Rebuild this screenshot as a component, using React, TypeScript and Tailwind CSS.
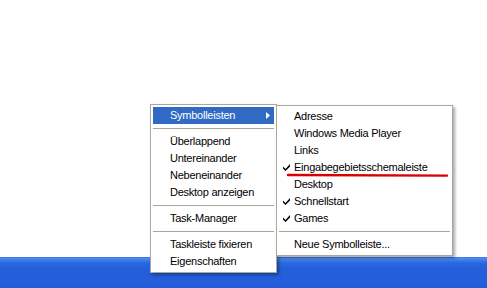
import React from "react";

const font = { fontFamily: '"Liberation Sans", Arial, sans-serif' };

function Check() {
  return (
    <svg width="7" height="7" viewBox="0 0 7 7" className="absolute left-[4px] top-[5px]">
      <polygon points="0,2.5 2.5,5 7,0 7,2.5 2.5,7 0,4.5" fill="#000" />
    </svg>
  );
}

function Separator() {
  return (
    <div className="h-[9px] flex items-center">
      <div className="h-px w-full bg-[#aca899]" />
    </div>
  );
}

function Item({ label, checked, pad = "pl-[17px]" }: { label: string; checked?: boolean; pad?: string }) {
  return (
    <div className={`relative h-[17px] flex items-center ${pad} text-black`}>
      {checked && <Check />}
      <span>{label}</span>
    </div>
  );
}

export default function App() {
  return (
    <div className="relative w-[487px] h-[288px] overflow-hidden bg-white flex flex-col text-[11px] tracking-[-0.25px]" style={font}>
      <div className="flex-1" />
      {/* taskbar */}
      <div className="h-[31px] bg-[linear-gradient(to_bottom,#3168d5_0px,#4c8ef0_1px,#3f80ec_3px,#2a67df_6px,#245edb_12px,#245edb_26px,#2259d6_31px)]" />

      {/* main context menu */}
      <div className="absolute left-[150px] top-[104px] w-[127px] bg-white border border-[#aca899] p-[2px] shadow-[2px_2px_3px_rgba(0,0,0,0.35)]">
        <div className="relative h-[17px] flex items-center pl-[17px] bg-[#316ac5] text-white">
          <span>Symbolleisten</span>
          <svg width="4" height="7" viewBox="0 0 4 7" className="absolute right-[4px] top-[5px]">
            <polygon points="0,0 4,3.5 0,7" fill="#fff" />
          </svg>
        </div>
        <Separator />
        <Item label="Überlappend" />
        <Item label="Untereinander" />
        <Item label="Nebeneinander" />
        <Item label="Desktop anzeigen" />
        <Separator />
        <Item label="Task-Manager" />
        <Separator />
        <Item label="Taskleiste fixieren" />
        <Item label="Eigenschaften" />
      </div>

      {/* Symbolleisten submenu */}
      <div className="absolute left-[276px] top-[105px] w-[177px] bg-white border border-[#aca899] p-[2px] shadow-[2px_2px_3px_rgba(0,0,0,0.35)]">
        <Item label="Adresse" pad="pl-[15px]" />
        <Item label="Windows Media Player" pad="pl-[15px]" />
        <Item label="Links" pad="pl-[15px]" />
        <Item label="Eingabegebietsschemaleiste" pad="pl-[15px]" checked />
        <Item label="Desktop" pad="pl-[15px]" />
        <Item label="Schnellstart" pad="pl-[15px]" checked />
        <Item label="Games" pad="pl-[15px]" checked />
        <Separator />
        <Item label="Neue Symbolleiste..." pad="pl-[15px]" />
      </div>

      {/* red annotation underline */}
      <svg width="487" height="288" className="absolute left-0 top-0 pointer-events-none">
        <path d="M288 175 L447 175.6" stroke="#d80000" strokeWidth="2.4" strokeLinecap="round" />
      </svg>
    </div>
  );
}
